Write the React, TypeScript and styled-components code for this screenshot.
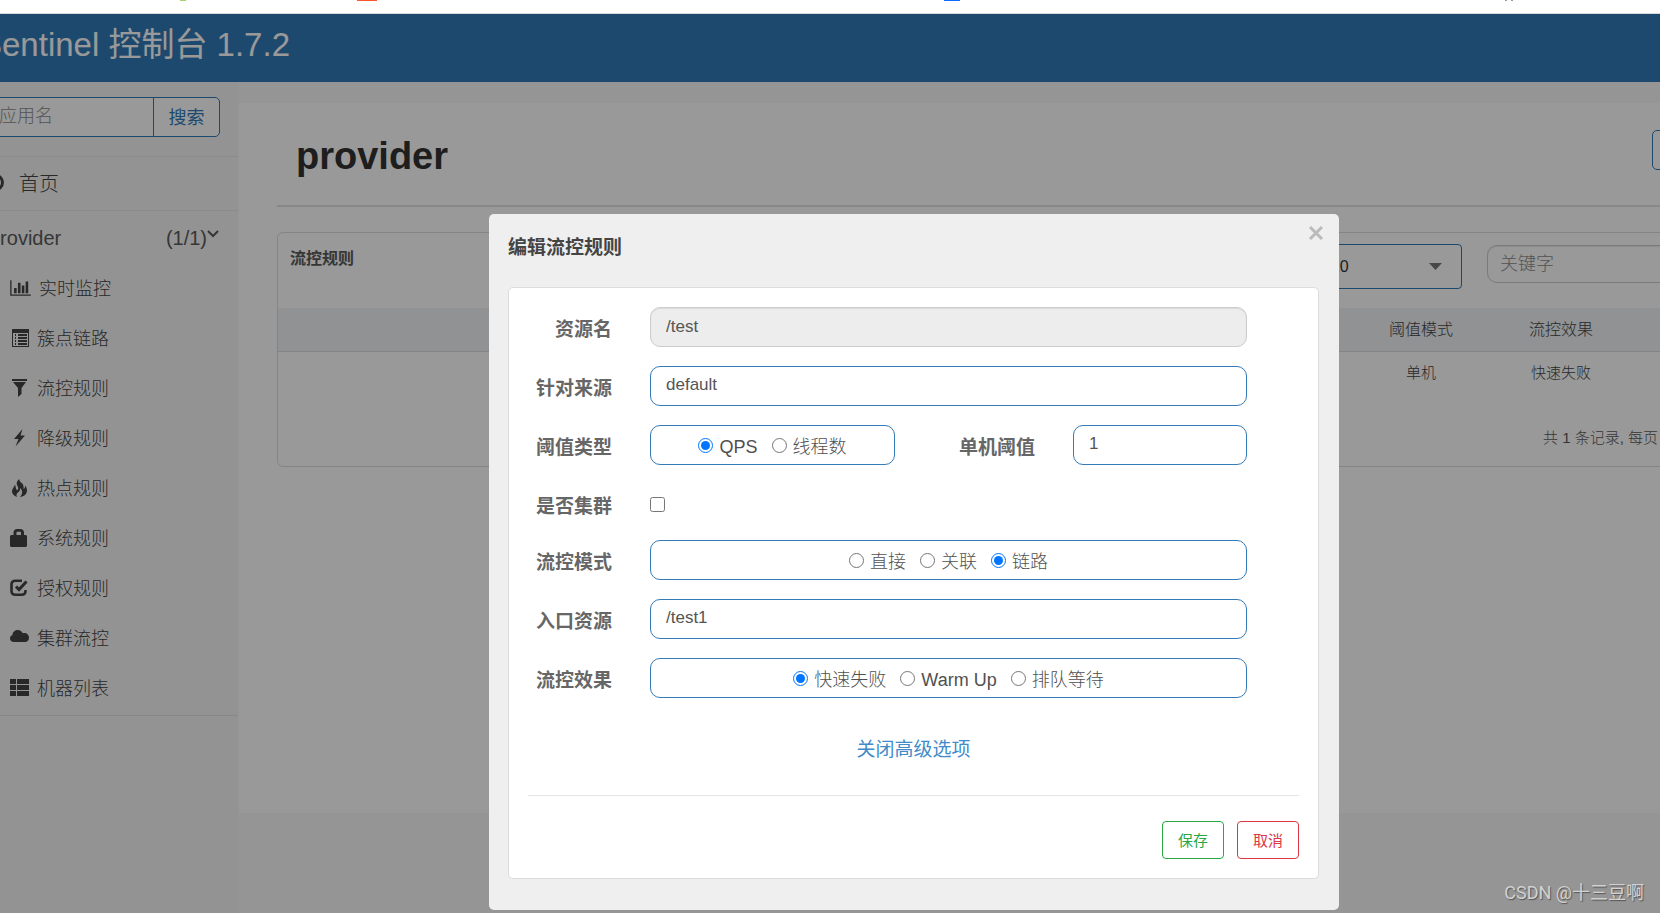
import React, { useState } from 'react';
import styled, { createGlobalStyle } from 'styled-components';

const GlobalStyle = createGlobalStyle`
  *, *::before, *::after { box-sizing: border-box; }
  body {
    margin: 0;
    background: #fff;
    color: #5a5a5a;
    font-family: "Liberation Sans", "Noto Sans CJK SC", sans-serif;
    font-size: 18px;
    overflow: hidden;
  }
  button, input, select { font-family: inherit; }
`;

const blue = '#337ab7';

/* The page is wider than the window on both sides; the viewport clips it. */
const Viewport = styled.div`
  display: flex;
  flex-direction: column;
  min-height: 100vh;
  overflow: hidden;
  position: relative;
`;

const BrowserStrip = styled.div`
  display: grid;
  grid-template-columns: 180fr 6fr 171fr 20fr 567fr 16fr 545fr 2fr 4fr 2fr 147fr;
  height: 14px;
  border-bottom: 1px solid #d8dada;
`;

const TabMark = styled.span<{ $color: string; $column: number }>`
  grid-column: ${(p) => p.$column};
  height: 1px;
  background: ${(p) => p.$color};
`;

const Shell = styled.div`
  position: relative;
  flex: 1;
  display: flex;
  flex-direction: column;
  margin: 0 -188px 0 -20px;
  background: #f8f8f8;
`;

const Header = styled.header`
  height: 68px;
  padding-bottom: 12px;
  display: flex;
  align-items: center;
  background: ${blue};
`;

const Brand = styled.a`
  color: #fff;
  font-size: 33px;
  text-decoration: none;
  white-space: nowrap;
`;

const Body = styled.div`
  flex: 1;
  display: flex;
`;

const Sidebar = styled.nav`
  flex: none;
  width: 259px;
  background: #f6f6f6;
  border-right: 1px solid #f9f9f9;
`;

const SearchBox = styled.form`
  display: flex;
  margin: 15px 18px 19px 4px;
  height: 40px;
  border: 1px solid ${blue};
  border-radius: 5px;
  overflow: hidden;
  background: #fff;
`;

const SearchInput = styled.input`
  flex: 1;
  min-width: 0;
  border: 0;
  padding: 0 14px 2px;
  background: transparent;
  font-size: 18px;
  font-weight: 300;
  &::placeholder { color: #8c8c8c; }
`;

const SearchButton = styled.button`
  width: 66px;
  border: 0;
  border-left: 1px solid ${blue};
  background: transparent;
  color: ${blue};
  font-size: 18px;
  padding: 0 0 3px;
`;

const HomeLink = styled.a`
  display: flex;
  align-items: center;
  gap: 15px;
  height: 55px;
  padding: 0 0 2px 7px;
  border-top: 1px solid #e7e7e7;
  border-bottom: 1px solid #e7e7e7;
  color: #444;
  font-size: 20px;
  font-weight: 300;
  text-decoration: none;
`;

const AppToggle = styled.button`
  display: flex;
  align-items: center;
  width: 100%;
  height: 52px;
  padding: 2px 19px 0 9px;
  border: 0;
  background: none;
  color: #5a5a5a;
  font-size: 20px;
`;

const AppCount = styled.span`
  margin-left: auto;
`;

const MenuList = styled.ul`
  margin: 0;
  padding: 0 0 2px;
  list-style: none;
  border-bottom: 1px solid #e2e2e2;
`;

const MenuLink = styled.a`
  display: flex;
  align-items: center;
  gap: 8px;
  height: 50px;
  padding-left: 30px;
  color: #444;
  font-size: 18px;
  font-weight: 300;
  text-decoration: none;
  span { padding-bottom: 2px; }
`;

const Main = styled.main`
  flex: 1;
  min-width: 0;
  margin: 21px 0 100px;
  padding: 27px 38px 0;
  background: #fff;
`;

const PageHead = styled.div`
  display: flex;
  align-items: flex-start;
  justify-content: space-between;
  padding-left: 19px;
  height: 77px;
  border-bottom: 2px solid #e3e3e3;
`;

const PageTitle = styled.h1`
  margin: 0;
  padding-top: 5px;
  color: #333;
  font-size: 38px;
  line-height: 42px;
`;

const AddButton = styled.button`
  width: 158px;
  height: 40px;
  border: 1px solid ${blue};
  border-radius: 5px;
  background: #fff;
`;

const RulesCard = styled.section`
  margin-top: 25px;
  border: 1px solid #dcdcdc;
  border-radius: 6px;
`;

const RulesHead = styled.div`
  display: flex;
  align-items: flex-start;
  height: 75px;
  padding: 11px 22px 0 12px;
`;

const RulesTitle = styled.h2`
  margin: 3px auto 0 0;
  font-size: 16px;
  line-height: 24px;
`;

const MachinePicker = styled.div`
  position: relative;
  margin-right: 25px;
`;

const MachineSelect = styled.select`
  appearance: none;
  width: 170px;
  height: 45px;
  padding: 0 40px 0 20px;
  border: 1px solid ${blue};
  border-radius: 4px;
  background: #fff;
  color: #333;
  font-size: 16px;
`;

const SelectCaret = styled.svg`
  position: absolute;
  right: 20px;
  top: 19px;
  pointer-events: none;
`;

const KeywordInput = styled.input`
  width: 300px;
  height: 38px;
  margin-top: 1px;
  padding: 0 12px;
  border: 1px solid #ccc;
  border-radius: 10px;
  background: #fff;
  font-size: 18px;
  font-weight: 300;
  box-shadow: inset 0 1px 1px rgba(0, 0, 0, 0.08);
  &::placeholder { color: #8c8c8c; }
`;

const RulesTable = styled.table`
  width: 100%;
  table-layout: fixed;
  border-collapse: collapse;
  text-align: center;
  color: #444;
  th {
    height: 43px;
    padding: 0 0 2px;
    background: #f0f3f6;
    border-bottom: 1px solid #dcdcdc;
    font-size: 16px;
    font-weight: 300;
  }
  td {
    height: 41px;
    padding: 0;
    font-size: 15px;
    font-weight: 300;
  }
`;

const Col = styled.col<{ $width?: number }>`
  ${(p) => p.$width && `width: ${p.$width}px;`}
`;

const Pager = styled.div`
  display: flex;
  justify-content: flex-end;
  height: 74px;
  padding: 34px 151px 0 0;
  font-size: 15px;
  font-weight: 300;
  line-height: 24px;
`;

const Backdrop = styled.div`
  position: absolute;
  inset: 0;
  padding-top: 200px;
  background: rgba(0, 0, 0, 0.4);
`;

const Dialog = styled.div`
  position: relative;
  width: 850px;
  margin: 0 auto;
  padding: 0 20px 31px 19px;
  border-radius: 5px;
  background: #efefef;
`;

const DialogTitle = styled.h2`
  margin: 0;
  height: 73px;
  padding-top: 20px;
  color: #444;
  font-size: 19px;
  line-height: 28px;
`;

const CloseButton = styled.button`
  position: absolute;
  top: 8px;
  right: 12px;
  display: flex;
  padding: 2px;
  border: 0;
  background: none;
`;

const Panel = styled.div`
  padding: 19px;
  border: 1px solid #dcdcdc;
  border-radius: 5px;
  background: #fff;
`;

const Form = styled.div`
  display: grid;
  row-gap: 19px;
  margin-right: 52px;
`;

const Row = styled.div<{ $short?: boolean }>`
  display: grid;
  grid-template-columns: 84px 1fr;
  column-gap: 38px;
  align-items: center;
  height: ${(p) => (p.$short ? 37 : 40)}px;
  padding-top: ${(p) => (p.$short ? 3 : 0)}px;
`;

const RowLabel = styled.label`
  padding-top: 1px;
  color: #666;
  font-size: 19px;
  font-weight: 700;
  text-align: right;
  white-space: nowrap;
`;

const Split = styled.div`
  display: grid;
  grid-template-columns: 245px 1fr 174px;
  align-items: center;
  ${RowLabel} { padding-right: 38px; }
`;

const TextInput = styled.input`
  width: 100%;
  height: 40px;
  padding: 0 15px 2px;
  border: 1px solid ${blue};
  border-radius: 10px;
  background: #fff;
  color: #555;
  font-size: 17px;
  &:disabled {
    padding-bottom: 0;
    border-color: #ccc;
    background: #ededed;
    box-shadow: inset 0 1px 1px rgba(0, 0, 0, 0.08);
  }
`;

const RadioBox = styled.div`
  display: flex;
  align-items: center;
  justify-content: center;
  gap: 14px;
  height: 40px;
  border: 1px solid ${blue};
  border-radius: 10px;
`;

const RadioLabel = styled.label`
  display: flex;
  align-items: center;
  gap: 6px;
  color: #505050;
  font-size: 18px;
  line-height: 24px;
  font-weight: 300;
  span { padding-top: 4px; }
`;

const Tick = styled.input`
  width: 15px;
  height: 15px;
  margin: 0;
`;

const Advanced = styled.a`
  display: block;
  margin: 38px auto 31px;
  width: max-content;
  color: #428bca;
  font-size: 19px;
  line-height: 28px;
  text-decoration: none;
`;

const Actions = styled.div`
  display: flex;
  justify-content: flex-end;
  gap: 13px;
  padding-top: 25px;
  border-top: 1px solid #e5e5e5;
`;

const ActionButton = styled.button<{ $color: string }>`
  width: 62px;
  height: 38px;
  padding: 0 0 2px;
  border: 1px solid ${(p) => p.$color};
  border-radius: 4px;
  background: #fff;
  color: ${(p) => p.$color};
  font-size: 15px;
`;

const Watermark = styled.div`
  position: absolute;
  right: 16px;
  bottom: 7px;
  color: #d2d2d2;
  font: 18px/26px Roboto, "Noto Sans CJK SC", sans-serif;
  text-shadow: 1px 1px 1px #555;
`;

const Glyph = ({ children, width = 19 }: { children: React.ReactNode; width?: number }) => (
  <svg width={width} height="18" viewBox={`0 0 ${width} 18`} fill="currentColor" aria-hidden="true">
    {children}
  </svg>
);

const menu: { label: string; icon: React.ReactNode }[] = [
  {
    label: '实时监控',
    icon: (
      <svg width="21" height="18" viewBox="0 0 2048 1792" fill="currentColor" aria-hidden="true">
        <path d="M640 896v512h-256v-512h256zM1024 384v1024h-256v-1024h256zM2048 1536v128h-2048v-1536h128v1408h1920zM1408 640v768h-256v-768h256zM1792 256v1152h-256v-1152h256z" />
      </svg>
    ),
  },
  {
    label: '簇点链路',
    icon: (
      <Glyph>
        <path fillRule="evenodd" d="M2 0h17v18H2zM3 4v13h15V4z" />
        <path d="M5 5h1v2H5zM8 5h9v2H8zM5 8h1v2H5zM8 8h9v2H8zM5 11h1v2H5zM8 11h9v2H8zM5 14h1v2H5zM8 14h9v2H8z" />
      </Glyph>
    ),
  },
  {
    label: '流控规则',
    icon: (
      <Glyph>
        <path d="M2 0h15v2H2zM3 3h13l-4.500 6v6L8 18V9z" />
      </Glyph>
    ),
  },
  {
    label: '降级规则',
    icon: (
      <Glyph>
        <path d="M12.500 0 4 10h4.500l-3 7.500L15 6.500h-4.500z" />
      </Glyph>
    ),
  },
  {
    label: '热点规则',
    icon: (
      <Glyph>
        <path d="M9.500 0c-3 2-3.500 4.500-2 7 1 1.800 1 3.500-.3 4.200C5.500 10.500 6 8 5 5.500c-.5 2-3 4-3 7C2 15 4 17 7 18c-1-2-.5-3.500 1-4.500 1.500-1 2.300-2.500 2-4.500 1.800 1.500 2.500 3.500 2 5.500-.3 1.300-1 2.500-2 3.500 4-.5 7-3 7-6.500 0-2-.8-3.800-2-5 .2 1.800-.3 3-1.300 3.800C13.800 6.500 13 4.500 11 3.500 10 2.500 9.300 1.500 9.500 0z" />
      </Glyph>
    ),
  },
  {
    label: '系统规则',
    icon: (
      <Glyph>
        <path fillRule="evenodd" d="M1 6h2.500V3.500C3.500 1.500 5 0 7 0h3.500C12.500 0 14 1.500 14 3.500V6h2l1 1v10l-1 1H1l-1-1V7zM6.500 6H11V3.500c0-.5-.3-.8-.8-.8H7.300c-.5 0-.8.3-.8.800z" />
      </Glyph>
    ),
  },
  {
    label: '授权规则',
    icon: (
      <Glyph>
        <path d="M12 1.800H5.500Q1.500 1.800 1.500 5.500v6.500Q1.500 15.800 5.500 15.800h6Q15.500 15.800 15.500 12v-1" fill="none" stroke="currentColor" strokeWidth="2.600" />
        <path d="M6 7.500l3 3L16.500 2.500" fill="none" stroke="currentColor" strokeWidth="3" />
      </Glyph>
    ),
  },
  {
    label: '集群流控',
    icon: (
      <Glyph>
        <path d="M4 13C1.500 13 0 11.500 0 9.500 0 7.800 1 6.500 2.500 6 2.500 3 5 1 7.800 1c2.400 0 4.200 1.300 5 3.200C16.500 3.500 19 5.800 19 8.800 19 11.300 17.500 13 15 13z" />
      </Glyph>
    ),
  },
  {
    label: '机器列表',
    icon: (
      <Glyph>
        <path d="M0 0h6v5H0zM7 0h12v5H7zM0 6h6v5H0zM7 6h12v5H7zM0 12h6v5H0zM7 12h12v5H7z" />
      </Glyph>
    ),
  },
];

interface RadioGroupProps {
  name: string;
  options: string[];
  initial: string;
}

const RadioGroup = ({ name, options, initial }: RadioGroupProps) => {
  const [value, setValue] = useState(initial);
  return (
    <RadioBox role="radiogroup" aria-labelledby={`${name}-label`}>
      {options.map((option) => (
        <RadioLabel key={option}>
          <Tick type="radio" name={name} checked={value === option} onChange={() => setValue(option)} />
          <span>{option}</span>
        </RadioLabel>
      ))}
    </RadioBox>
  );
};

const EditRuleDialog = () => (
  <Dialog role="dialog" aria-labelledby="dialog-title">
    <DialogTitle id="dialog-title">编辑流控规则</DialogTitle>
    <CloseButton type="button" aria-label="关闭">
      <svg width="18" height="18" viewBox="0 0 18 18" stroke="#bbb" strokeWidth="3">
        <path d="M3 3l12 12M15 3L3 15" />
      </svg>
    </CloseButton>
    <Panel>
      <Form>
        <Row>
          <RowLabel htmlFor="resource">资源名</RowLabel>
          <TextInput id="resource" defaultValue="/test" disabled />
        </Row>
        <Row>
          <RowLabel htmlFor="origin">针对来源</RowLabel>
          <TextInput id="origin" defaultValue="default" />
        </Row>
        <Row>
          <RowLabel as="span" id="grade-label">阈值类型</RowLabel>
          <Split>
            <RadioGroup name="grade" options={['QPS', '线程数']} initial="QPS" />
            <RowLabel htmlFor="count">单机阈值</RowLabel>
            <TextInput id="count" defaultValue="1" />
          </Split>
        </Row>
        <Row $short>
          <RowLabel htmlFor="cluster">是否集群</RowLabel>
          <Tick id="cluster" type="checkbox" />
        </Row>
        <Row>
          <RowLabel as="span" id="strategy-label">流控模式</RowLabel>
          <RadioGroup name="strategy" options={['直接', '关联', '链路']} initial="链路" />
        </Row>
        <Row>
          <RowLabel htmlFor="entry">入口资源</RowLabel>
          <TextInput id="entry" defaultValue="/test1" />
        </Row>
        <Row>
          <RowLabel as="span" id="behavior-label">流控效果</RowLabel>
          <RadioGroup name="behavior" options={['快速失败', 'Warm Up', '排队等待']} initial="快速失败" />
        </Row>
      </Form>
      <Advanced href="#advanced">关闭高级选项</Advanced>
      <Actions>
        <ActionButton type="button" $color="#28a745">保存</ActionButton>
        <ActionButton type="button" $color="#dc3545">取消</ActionButton>
      </Actions>
    </Panel>
  </Dialog>
);

export default function App() {
  return (
    <Viewport>
      <GlobalStyle />
      <BrowserStrip>
        <TabMark $color="#a5d16f" $column={2} />
        <TabMark $color="#fb5531" $column={4} />
        <TabMark $color="#0f6bff" $column={6} />
        <TabMark $color="#999" $column={8} />
        <TabMark $color="#999" $column={10} />
      </BrowserStrip>
      <Shell>
        <Header>
          <Brand href="#home">Sentinel 控制台 1.7.2</Brand>
        </Header>
        <Body>
          <Sidebar>
            <SearchBox>
              <SearchInput placeholder="应用名" aria-label="应用名" />
              <SearchButton type="button">搜索</SearchButton>
            </SearchBox>
            <HomeLink href="#dashboard">
              <svg width="17" height="17" viewBox="0 0 17 17" aria-hidden="true">
                <circle cx="8.500" cy="8.500" r="7" fill="none" stroke="currentColor" strokeWidth="3" />
                <path d="M8.500 9l3-5" stroke="currentColor" strokeWidth="2" />
              </svg>
              首页
            </HomeLink>
            <AppToggle type="button">
              provider
              <AppCount>(1/1)</AppCount>
              <svg width="12" height="20" viewBox="0 0 12 20" fill="none" stroke="currentColor" strokeWidth="2" aria-hidden="true">
                <path d="M1 3l5 5 5-5" />
              </svg>
            </AppToggle>
            <MenuList>
              {menu.map((item) => (
                <li key={item.label}>
                  <MenuLink href="#rules">
                    {item.icon}
                    <span>{item.label}</span>
                  </MenuLink>
                </li>
              ))}
            </MenuList>
          </Sidebar>
          <Main>
            <PageHead>
              <PageTitle>provider</PageTitle>
              <AddButton type="button" aria-label="新增流控规则" />
            </PageHead>
            <RulesCard>
              <RulesHead>
                <RulesTitle>流控规则</RulesTitle>
                <MachinePicker>
                  <MachineSelect aria-label="机器">
                    <option>8720</option>
                  </MachineSelect>
                  <SelectCaret width="13" height="7" viewBox="0 0 13 7">
                    <path d="M0 0h13L6.500 7z" fill="#777" />
                  </SelectCaret>
                </MachinePicker>
                <KeywordInput placeholder="关键字" aria-label="关键字" />
              </RulesHead>
              <RulesTable>
                <colgroup>
                  <Col />
                  <Col $width={140} />
                  <Col $width={140} />
                  <Col $width={178} />
                </colgroup>
                <thead>
                  <tr>
                    <th />
                    <th>阈值模式</th>
                    <th>流控效果</th>
                    <th />
                  </tr>
                </thead>
                <tbody>
                  <tr>
                    <td />
                    <td>单机</td>
                    <td>快速失败</td>
                    <td />
                  </tr>
                </tbody>
              </RulesTable>
              <Pager>共 1 条记录, 每页</Pager>
            </RulesCard>
          </Main>
        </Body>
        <Backdrop>
          <EditRuleDialog />
        </Backdrop>
      </Shell>
      <Watermark>CSDN @十三豆啊</Watermark>
    </Viewport>
  );
}
